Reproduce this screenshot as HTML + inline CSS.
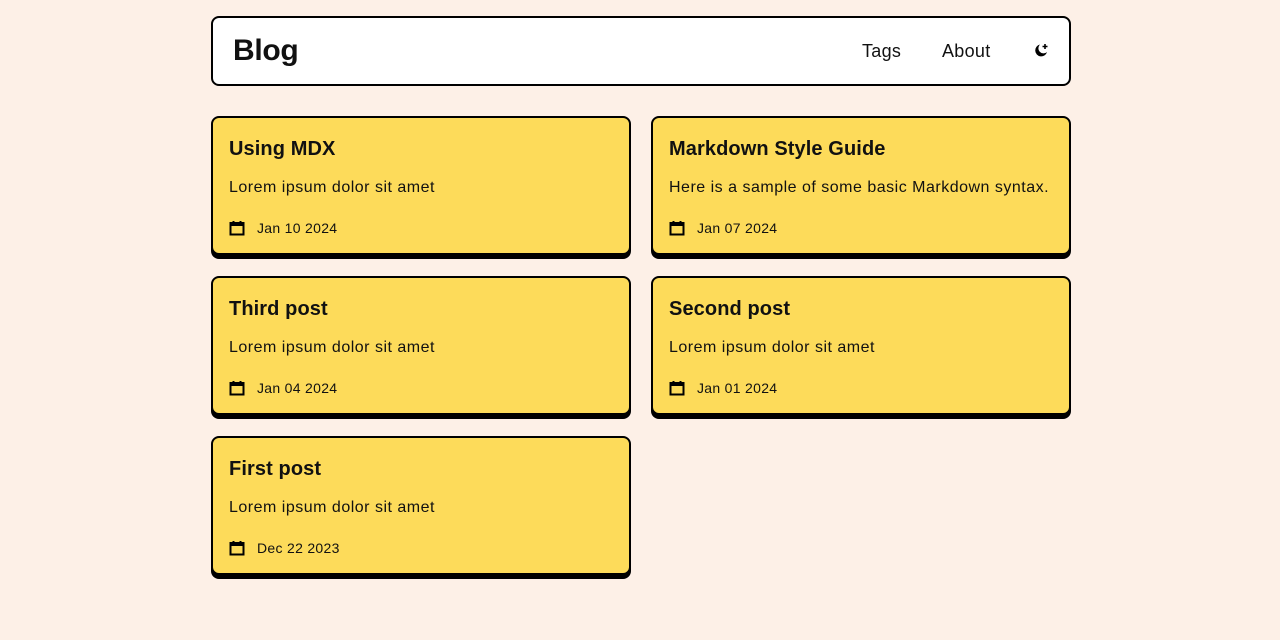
<!DOCTYPE html>
<html><head><style>
body{margin:0;background:#fdf0e7;font-family:"Liberation Sans",sans-serif;color:#111;}
.hdr{position:absolute;left:211px;top:16px;width:856px;height:66px;border:2px solid #000;border-radius:8px;background:#fff;}
.hdr .logo{position:absolute;left:20px;top:16px;font-size:30px;font-weight:bold;letter-spacing:-0.3px}
.hdr .nav{position:absolute;top:23px;font-size:18px;letter-spacing:0.3px}
.card{position:absolute;width:416px;height:135px;border:2px solid #000;border-radius:8px;background:#fddb5a;box-shadow:0 4px 0 #000;}
.card h2{position:absolute;left:16px;top:20px;margin:0;font-size:20px;font-weight:bold;letter-spacing:0.1px}
.card p{position:absolute;left:16px;top:61px;margin:0;font-size:16px;letter-spacing:0.5px}
.card .d{position:absolute;left:16px;top:102px;font-size:14px;display:flex;align-items:center;letter-spacing:.3px}
.card .d svg{margin-right:12px}
</style></head><body>
<div class="hdr"><div class="logo">Blog</div><div class="nav" style="left:649px">Tags</div><div class="nav" style="left:729px">About</div>
<svg style="position:absolute;left:819px;top:24px" width="18" height="18" viewBox="0 0 18 18"><path d="M8 2.5A6 6 0 1 0 15 10 5 5 0 0 1 8 2.5Z" fill="#000"/><path d="M13 2v5M10.5 4.5h5" stroke="#000" stroke-width="1.6"/></svg></div>
<div class="card" style="left:211px;top:116px"><h2>Using MDX</h2><p>Lorem ipsum dolor sit amet</p><div class="d"><svg width="16" height="16" viewBox="0 0 16 16"><rect x="1.5" y="3" width="13" height="11.5" fill="none" stroke="#000" stroke-width="2"/><rect x="1.5" y="3" width="13" height="3" fill="#000"/><path d="M4.5 1v3M11.5 1v3" stroke="#000" stroke-width="2"/></svg>Jan 10 2024</div></div>
<div class="card" style="left:651px;top:116px"><h2>Markdown Style Guide</h2><p>Here is a sample of some basic Markdown syntax.</p><div class="d"><svg width="16" height="16" viewBox="0 0 16 16"><rect x="1.5" y="3" width="13" height="11.5" fill="none" stroke="#000" stroke-width="2"/><rect x="1.5" y="3" width="13" height="3" fill="#000"/><path d="M4.5 1v3M11.5 1v3" stroke="#000" stroke-width="2"/></svg>Jan 07 2024</div></div>
<div class="card" style="left:211px;top:276px"><h2>Third post</h2><p>Lorem ipsum dolor sit amet</p><div class="d"><svg width="16" height="16" viewBox="0 0 16 16"><rect x="1.5" y="3" width="13" height="11.5" fill="none" stroke="#000" stroke-width="2"/><rect x="1.5" y="3" width="13" height="3" fill="#000"/><path d="M4.5 1v3M11.5 1v3" stroke="#000" stroke-width="2"/></svg>Jan 04 2024</div></div>
<div class="card" style="left:651px;top:276px"><h2>Second post</h2><p>Lorem ipsum dolor sit amet</p><div class="d"><svg width="16" height="16" viewBox="0 0 16 16"><rect x="1.5" y="3" width="13" height="11.5" fill="none" stroke="#000" stroke-width="2"/><rect x="1.5" y="3" width="13" height="3" fill="#000"/><path d="M4.5 1v3M11.5 1v3" stroke="#000" stroke-width="2"/></svg>Jan 01 2024</div></div>
<div class="card" style="left:211px;top:436px"><h2>First post</h2><p>Lorem ipsum dolor sit amet</p><div class="d"><svg width="16" height="16" viewBox="0 0 16 16"><rect x="1.5" y="3" width="13" height="11.5" fill="none" stroke="#000" stroke-width="2"/><rect x="1.5" y="3" width="13" height="3" fill="#000"/><path d="M4.5 1v3M11.5 1v3" stroke="#000" stroke-width="2"/></svg>Dec 22 2023</div></div>
</body></html>
